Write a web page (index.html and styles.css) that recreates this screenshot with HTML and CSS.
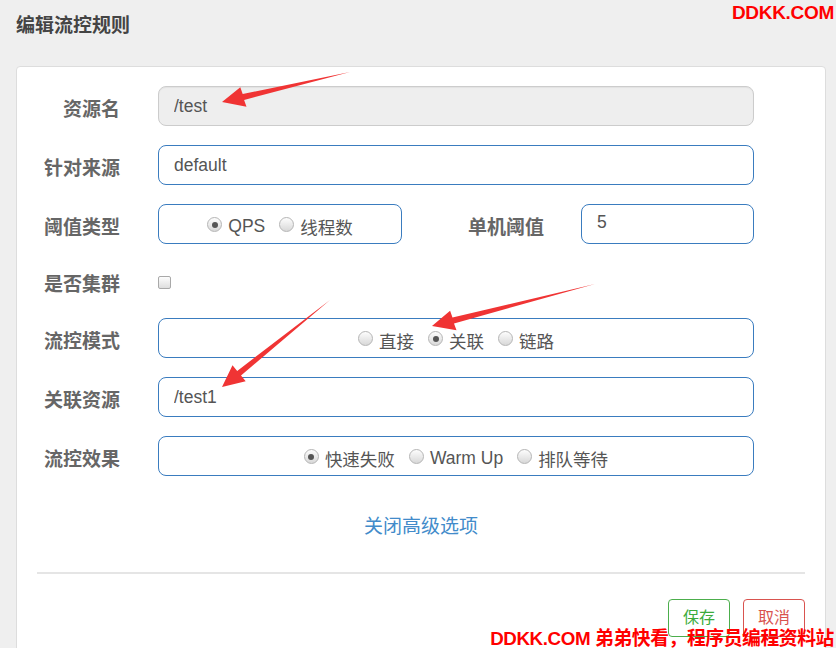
FILE: index.html
```html
<!DOCTYPE html>
<html lang="zh-CN">
  <head>
    <meta charset="UTF-8" />
    <title>编辑流控规则</title>
    <link rel="stylesheet" href="styles.css">
  </head>
  <body>
    <h2 class="page-title">编辑流控规则</h2>

    <div class="panel">
      <!-- 资源名 -->
      <div class="row">
        <label class="label">资源名</label>
        <input class="field readonly" type="text" value="/test" readonly />
      </div>

      <!-- 针对来源 -->
      <div class="row">
        <label class="label">针对来源</label>
        <input class="field" type="text" value="default" />
      </div>

      <!-- 阈值类型 + 单机阈值 -->
      <div class="row">
        <label class="label">阈值类型</label>
        <div class="box small">
          <span class="radio checked"></span><span class="opt">QPS</span>
          <span class="radio"></span><span class="opt">线程数</span>
        </div>
        <label class="label label-wide">单机阈值</label>
        <input class="field short" type="text" value="5" />
      </div>

      <!-- 是否集群 -->
      <div class="row row-check">
        <label class="label">是否集群</label>
        <span class="checkbox"></span>
      </div>

      <!-- 流控模式 -->
      <div class="row">
        <label class="label">流控模式</label>
        <div class="box">
          <span class="radio"></span><span class="opt">直接</span>
          <span class="radio checked"></span><span class="opt">关联</span>
          <span class="radio"></span><span class="opt">链路</span>
        </div>
      </div>

      <!-- 关联资源 -->
      <div class="row">
        <label class="label">关联资源</label>
        <input class="field" type="text" value="/test1" />
      </div>

      <!-- 流控效果 -->
      <div class="row">
        <label class="label">流控效果</label>
        <div class="box">
          <span class="radio checked"></span><span class="opt">快速失败</span>
          <span class="radio"></span><span class="opt">Warm Up</span>
          <span class="radio"></span><span class="opt">排队等待</span>
        </div>
      </div>

      <div class="advanced"><a href="#">关闭高级选项</a></div>

      <div class="divider"></div>

      <div class="actions">
        <button class="btn btn-save">保存</button>
        <button class="btn btn-cancel">取消</button>
      </div>
    </div>

    <!-- red annotation arrows -->
    <svg class="arrows" width="836" height="648" viewBox="0 0 836 648">
      <polygon points="350,72 242.7,94.1 240.3,87.2 222,102 246.5,106.8 244.1,99.9" />
      <polygon points="595,284 452.5,317.6 450.1,310.8 432,326 456.5,330.2 454,323.4" />
      <polygon points="330,300 237.2,370.9 232.5,365.2 222,387 245.7,381.2 241,375.5" />
    </svg>

    <div class="mark mark-top">DDKK.COM</div>
    <div class="mark mark-bottom">DDKK.COM 弟弟快看，程序员编程资料站</div>
  </body>
</html>
```

FILE: styles.css
```css
/* page */
body {
  margin: 0;
  height: 648px;
  overflow: hidden;
  background: #efefef;
  font-family: "Liberation Sans", Arial, "Noto Sans CJK SC", sans-serif;
  color: #555;
}

.page-title {
  margin: 0;
  padding: 14px 16px 0;
  line-height: 24px;
  font-size: 19px;
  font-weight: bold;
  color: #444;
}

/* form panel */
.panel {
  margin: 28px 10px 0 16px;
  padding: 19px 20px 40px;
  background: #fff;
  border: 1px solid #ddd;
  border-radius: 4px;
}

.row {
  display: flex;
  align-items: center;
  height: 40px;
  margin-bottom: 19px;
}

.row-check {
  height: 36px;
  margin-bottom: 19px;
}

.label {
  width: 83px;
  margin-right: 38px;
  padding-top: 3px;
  text-align: right;
  font-size: 19px;
  font-weight: bold;
  color: #666;
  white-space: nowrap;
}

.label-wide {
  width: 142px;
  margin-right: 37px;
}

/* inputs */
.field {
  box-sizing: border-box;
  width: 596px;
  height: 40px;
  padding: 0 15px;
  border: 1px solid #3a7cbf;
  border-radius: 8px;
  font-family: inherit;
  font-size: 17.5px;
  color: #555;
  outline: none;
}

.field.readonly {
  background: #eee;
  border-color: #ccc;
  box-shadow: inset 0 1px 1px rgba(0, 0, 0, 0.05);
}

.field.short {
  width: 173px;
  padding-bottom: 4px;
}

/* radio boxes */
.box {
  box-sizing: border-box;
  width: 596px;
  height: 40px;
  padding-top: 4px;
  border: 1px solid #3a7cbf;
  border-radius: 8px;
  display: flex;
  align-items: center;
  justify-content: center;
}

.box.small {
  width: 244px;
}

.radio {
  box-sizing: border-box;
  width: 15px;
  height: 15px;
  margin-top: -3px;
  border: 1px solid #b5b5b5;
  border-radius: 50%;
  background: linear-gradient(#fdfdfd, #d8d8d8);
  position: relative;
  margin-right: 6px;
}

.radio.checked::after {
  content: "";
  position: absolute;
  left: 3.5px;
  top: 3.5px;
  width: 6px;
  height: 6px;
  border-radius: 50%;
  background: #555;
}

.opt {
  font-size: 17.5px;
  color: #555;
  margin-right: 14px;
}

.opt:last-child {
  margin-right: 0;
}

.checkbox {
  box-sizing: border-box;
  width: 13px;
  height: 13px;
  margin-top: 2px;
  border: 1px solid #a9a9a9;
  border-radius: 2px;
  background: linear-gradient(#fdfdfd, #dedede);
}

/* advanced link */
.advanced {
  text-align: center;
  padding-top: 20px;
  line-height: 24px;
}

.advanced a {
  font-size: 19px;
  color: #428bca;
  text-decoration: none;
}

.divider {
  height: 2px;
  margin-top: 32px;
  background: #e5e5e5;
}

/* buttons */
.actions {
  display: flex;
  justify-content: flex-end;
  gap: 13px;
  margin-top: 25px;
}

.btn {
  width: 62px;
  height: 38px;
  padding: 0 0 5px;
  background: #fff;
  border: 1px solid;
  border-radius: 4px;
  font-family: inherit;
  font-size: 16px;
}

.btn-save {
  color: #3cab3c;
  border-color: #4cae4c;
}

.btn-cancel {
  color: #d9534f;
  border-color: #d9534f;
}

/* overlays */
.arrows {
  position: absolute;
  left: 0;
  top: 0;
  pointer-events: none;
}

.arrows polygon {
  fill: #f03434;
}

.mark {
  position: absolute;
  right: 2px;
  color: #ff0000;
  font-weight: bold;
  font-size: 19px;
  font-family: "Liberation Sans Narrow", "Liberation Sans", "Noto Sans CJK SC", sans-serif;
  letter-spacing: -0.3px;
}

.mark-top {
  top: 2px;
}

.mark-bottom {
  top: 623px;
  font-size: 18.8px;
  letter-spacing: -0.4px;
}
```
